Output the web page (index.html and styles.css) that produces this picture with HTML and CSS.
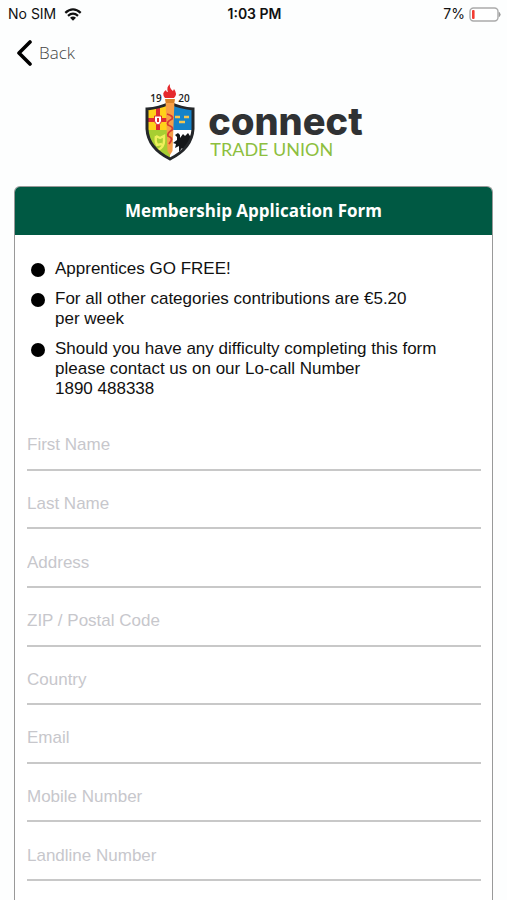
FILE: index.html
```html
<!DOCTYPE html>
<html lang="en">
<head>
<meta charset="utf-8">
<meta name="viewport" content="width=device-width, initial-scale=1">
<title>Membership Application Form</title>
<link rel="stylesheet" href="styles.css">
</head>
<body>
<div class="status">
  <div class="status-left">
    <span>No SIM</span>
    <svg class="wifi" viewBox="0 0 18 13" aria-hidden="true">
      <path d="M1.3 4.8Q9-2 16.7 4.8M4 7.8Q9 3.5 14 7.8" fill="none" stroke="#111" stroke-width="2.3"/>
      <path d="M6 9.8Q9 7.4 12 9.8L9 12.8Z" fill="#111"/>
    </svg>
  </div>
  <span class="time">1:03 PM</span>
  <div class="status-right">
    <span>7%</span>
    <svg class="battery" viewBox="0 0 32 15" aria-hidden="true">
      <rect x="1" y="1" width="28" height="13" rx="3.5" fill="#fff" stroke="#aaa" stroke-width="1.4"/>
      <rect x="3" y="3" width="2.6" height="9" rx="1" fill="#f23c32"/>
      <path d="M30.3 5.5Q32 7.5 30.3 9.5Z" fill="#999" stroke="#999"/>
    </svg>
  </div>
</div>
<header>
  <button type="button" class="back">
    <svg class="chevron" viewBox="0 0 16 26" aria-hidden="true"><path d="M14 2L3 13L14 24" fill="none" stroke="#000" stroke-width="3.6" stroke-linecap="round" stroke-linejoin="round"/></svg>
    <span>Back</span>
  </button>
  <div class="brand">
    <svg class="crest" viewBox="0 0 52 78" role="img" aria-label="1920 crest">
      <defs><clipPath id="shield"><path d="M3 25Q15 24 26 19Q37 24 49 25V45Q48 64 26 75Q4 64 3 45Z"/></clipPath></defs>
      <g clip-path="url(#shield)">
        <path fill="#ffd21a" d="M0 15H26V46H0Z"/>
        <path fill="#a7ce32" d="M0 46H26V78H0Z"/>
        <path fill="#1683c9" d="M26 15H52V46H26Z"/>
        <path fill="#fff" d="M26 46H52V78H26Z"/>
        <path d="M14 20V46M0 36H26" stroke="#df2b32" stroke-width="4"/>
        <path d="M10.500 32H17.500V37Q17 40 14 41Q11 40 10.500 37Z" fill="#fff" stroke="#df2b32"/>
        <path d="M13 34H15V38H13Z" fill="#df2b32"/>
        <path d="M31 33H36M40 33H45M35 38H41" stroke="#f4c553" stroke-width="2.500"/>
        <path d="M12 52L16 54L20 52V57Q20 63 14 66M12 52Q11 57 13 61L18 60" fill="none" stroke="#eff05b" stroke-width="2.400"/>
        <path d="M31 51L34 49L36 51L36 54L39 50L41 52L44 49L46 52L48 51L47 57L49 60L45 60L46 65L42 62L41 68L38 64L35 68L35 62L31 64L32 60L29 59L33 56L33 53Z" fill="#151719"/>
      </g>
      <path d="M3 25Q15 24 26 19Q37 24 49 25V45Q48 64 26 75Q4 64 3 45Z" fill="none" stroke="#24272a" stroke-width="3"/>
      <path d="M21.500 16H30.500L28.500 67L26 71L23.500 67Z" fill="#f7a047"/>
      <path d="M21 15H31L30 19H22Z" fill="#d98128"/>
      <path d="M23 30Q30 32 28 35Q22 38 24 41Q30 43 28 46Q23 49 24 52Q29 54 27 57L25 60" fill="none" stroke="#d93a31" stroke-width="1.800"/>
      <path d="M21 14Q17 9 22 6Q22 8 24 8Q22 3 26 0Q25 4 29 7L30 5Q34 10 30 14Z" fill="#e5292d"/>
      <text class="year" x="12" y="18">19</text>
      <text class="year" x="40" y="18">20</text>
    </svg>
    <div class="wordmark">
      <span class="name">connect</span>
      <span class="tagline">TRADE UNION</span>
    </div>
  </div>
</header>
<main class="card">
  <h1>Membership Application Form</h1>
  <ul>
    <li>Apprentices GO FREE!</li>
    <li>For all other categories contributions are €5.20 per&nbsp;week</li>
    <li>Should you have any difficulty completing this form please contact us on our Lo-call Number <span class="phone">1890 488338</span></li>
  </ul>
  <form>
    <input type="text" placeholder="First Name" aria-label="First Name">
    <input type="text" placeholder="Last Name" aria-label="Last Name">
    <input type="text" placeholder="Address" aria-label="Address">
    <input type="text" placeholder="ZIP / Postal Code" aria-label="ZIP / Postal Code">
    <input type="text" placeholder="Country" aria-label="Country">
    <input type="email" placeholder="Email" aria-label="Email">
    <input type="tel" placeholder="Mobile Number" aria-label="Mobile Number">
    <input type="tel" placeholder="Landline Number" aria-label="Landline Number">
  </form>
</main>
</body>
</html>
```
FILE: styles.css
```css
* { box-sizing: border-box; }
body {
  margin: 0;
  min-height: 100vh;
  display: flex;
  flex-direction: column;
  background: #fdfefe;
  color: #111;
  font-family: "Liberation Sans", Arial, sans-serif;
}
.status {
  display: grid;
  grid-template-columns: 1fr auto 1fr;
  align-items: center;
  height: 28px;
  padding: 0 6px 0 8px;
  font: 14px/28px Inter, sans-serif;
}
.status-left, .status-right { display: flex; align-items: center; gap: 8px; }
.status-right { justify-content: flex-end; gap: 4px; }
.wifi { width: 18px; height: 13px; }
.battery { width: 32px; height: 15px; }
.time { font-weight: 600; }
.back {
  display: flex;
  align-items: center;
  gap: 7px;
  height: 50px;
  margin: 0;
  padding: 0 16px;
  border: 0;
  background: none;
  color: #444;
  font: 300 17px/24px "Open Sans", sans-serif;
}
.chevron { width: 16px; height: 26px; }
.brand {
  display: flex;
  justify-content: center;
  gap: 12px;
  padding: 6px 0 24px;
}
.crest { width: 52px; height: 78px; }
.year { font: 600 10px "Open Sans", sans-serif; fill: #222; text-anchor: middle; }
.wordmark { display: flex; flex-direction: column; padding-top: 20px; }
.name { font: 800 38px/34px Inter, sans-serif; color: #303234; }
.tagline { padding-left: 2px; font: 18px/22px Lato, sans-serif; color: #8dbf3f; }
.card {
  flex: 1;
  display: flex;
  flex-direction: column;
  margin: 0 14px;
  border: 1px solid #999;
  border-bottom: 0;
  border-radius: 6px 6px 0 0;
  background: #fff;
}
h1 {
  margin: 0;
  border-radius: 5px 5px 0 0;
  background: #005943;
  color: #fff;
  text-align: center;
  font: 700 17px/48px "Open Sans", sans-serif;
}
ul {
  display: flex;
  flex-direction: column;
  gap: 10px;
  margin: 0;
  padding: 24px 48px 13px 40px;
  list-style: none;
  font-size: 17px;
  line-height: 20px;
}
li { position: relative; }
li::before {
  content: "";
  position: absolute;
  left: -24px;
  top: 4px;
  width: 14px;
  height: 14px;
  border-radius: 50%;
  background: #000;
}
.phone { display: block; }
form {
  flex: 1;
  display: flex;
  flex-direction: column;
  padding: 0 11px 19px 12px;
}
input {
  flex: 1;
  width: 100%;
  min-height: 48px;
  padding: 10px 0 0;
  border: 0;
  border-bottom: 2px solid #c8c8c8;
  border-radius: 0;
  outline: 0;
  background: none;
  font: 17px/20px "Liberation Sans", Arial, sans-serif;
}
input::placeholder { color: #c7c7cc; opacity: 1; }
```
